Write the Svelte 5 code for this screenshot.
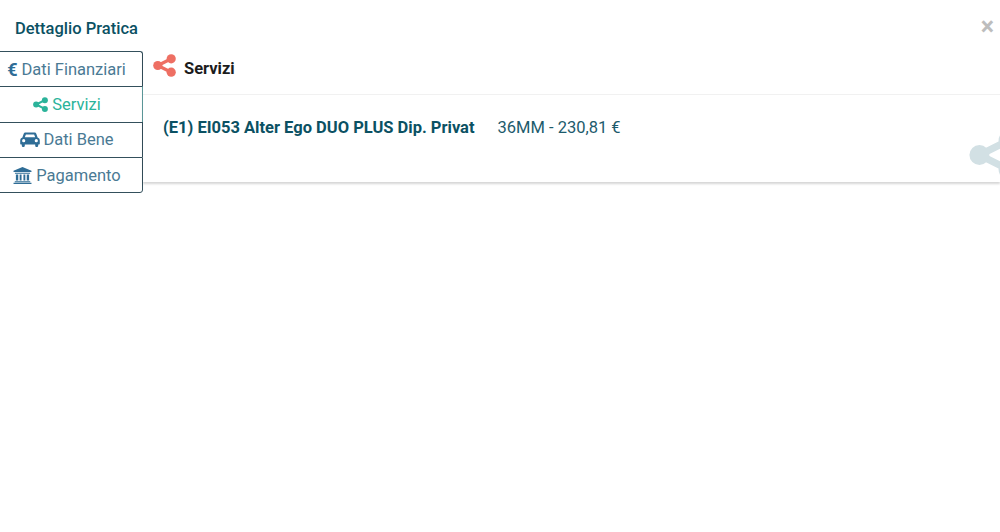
<script>
	const tabs = [
		{ label: 'Dati Finanziari', icon: 'euro' },
		{ label: 'Servizi', icon: 'share', active: true },
		{ label: 'Dati Bene', icon: 'car' },
		{ label: 'Pagamento', icon: 'bank' }
	];
</script>

{#snippet share(cls)}
	<svg class={cls} viewBox="0 0 24 24" aria-hidden="true">
		<path d="M19 5 5 12l14 7" fill="none" stroke="currentColor" stroke-width="3.4" />
		<circle cx="19" cy="5" r="4.8" fill="currentColor" />
		<circle cx="5" cy="12" r="4.8" fill="currentColor" />
		<circle cx="19" cy="19" r="4.8" fill="currentColor" />
	</svg>
{/snippet}

<div class="modal">
	<header class="top">
		<h4>Dettaglio Pratica</h4>
		<span class="close">×</span>
	</header>

	<div class="content">
		<nav class="tabs">
			{#each tabs as tab}
				<div class="tab" class:active={tab.active}>
					{#if tab.icon === 'euro'}
						<span class="euro">€</span>
					{:else if tab.icon === 'share'}
						{@render share('tab-share')}
					{:else if tab.icon === 'car'}
						<svg class="car" viewBox="0 0 20 16" aria-hidden="true">
							<path fill="currentColor" fill-rule="evenodd" d="M5.600 1h8.800c.9 0 1.600.5 1.900 1.300L17.600 6c1.300.4 2.200 1.500 2.200 2.900v3.300c0 .4-.3.7-.7.7h-.9v1.300c0 .8-.7 1.400-1.500 1.400s-1.500-.6-1.500-1.400v-1.300H4.800v1.300c0 .8-.7 1.400-1.500 1.400s-1.500-.6-1.500-1.400v-1.300H.9c-.4 0-.7-.3-.7-.7V8.900C.2 7.500 1.100 6.400 2.400 6l1.300-3.700C4 1.500 4.700 1 5.600 1ZM5.900 3 4.800 5.800h10.400L14.100 3ZM3.700 7.600a1.600 1.600 0 1 0 0 3.200 1.600 1.600 0 0 0 0-3.200Zm12.600 0a1.600 1.600 0 1 0 0 3.200 1.600 1.600 0 0 0 0-3.200Z" />
						</svg>
					{:else}
						<svg class="bank" viewBox="0 0 20 18" aria-hidden="true">
							<path fill="currentColor" d="M10 0 19.500 4v1.300H.5V4ZM2 6h16v1.200H2ZM3 8h2.500v6.200H3Zm4 0h2v6.200H7Zm4 0h2v6.200h-2Zm3.500 0H17v6.200h-2.500ZM1.800 15h16.400v1.200H1.800ZM.5 16.700h19V18H.5Z" />
						</svg>
					{/if}
					<span>{tab.label}</span>
				</div>
			{/each}
		</nav>

		<section class="panel">
			<div class="panel-head">
				{@render share('head-share')}
				<strong>Servizi</strong>
			</div>
			<div class="panel-body">
				<span class="name">(E1) EI053 Alter Ego DUO PLUS Dip. Privat</span>
				<span class="price">36MM - 230,81 €</span>
				{@render share('watermark')}
			</div>
		</section>
	</div>
</div>

<style>
	:global(body) {
		background: #fff;
		font-family: Roboto, "Liberation Sans", sans-serif;
	}

	.modal {
		height: 532px;
		overflow: hidden;
		background: #fff;
	}

	.top {
		display: flex;
		align-items: center;
		justify-content: space-between;
		height: 51px;
		padding: 5px 6px 0 15px;
		box-sizing: border-box;
	}

	h4 {
		margin: 0;
		font-size: 16.5px;
		font-weight: 500;
		color: #0b5163;
	}

	.close {
		margin-top: -4px;
		font-size: 25px;
		font-weight: 700;
		line-height: 1;
		color: #bdbdbd;
	}

	.content {
		display: flex;
		align-items: flex-start;
	}

	.tabs {
		width: 144px;
		margin-left: -1px;
		flex-shrink: 0;
	}

	.tab {
		display: flex;
		align-items: center;
		justify-content: center;
		gap: 4px;
		height: 34.25px;
		padding-right: 8px;
		border: 1px solid #34505c;
		border-bottom: 0;
		font-size: 16.5px;
		color: #4a7a94;
	}

	.tab:first-child {
		padding-right: 9px;
		border-top-right-radius: 3px;
	}

	.tab:last-child {
		height: 33.25px;
		padding-top: 1px;
		border-bottom: 1px solid #34505c;
		border-bottom-right-radius: 3px;
	}

	.tab.active {
		color: #2bb39a;
		border-right-color: #5f9ea0;
		border-left-color: #5f9ea0;
	}

	.euro {
		font-weight: 700;
		font-size: 18px;
		color: #2f6d96;
	}

	.car {
		width: 20px;
		height: 17px;
		margin-right: -1px;
		color: #2f6d96;
	}

	.bank {
		width: 19px;
		height: 17px;
		color: #2f6d96;
	}

	:global(.tab-share) {
		width: 15px;
		height: 15px;
	}

	.panel {
		flex: 1;
		min-width: 0;
		box-shadow: 0 2px 2px rgba(0, 0, 0, 0.16);
	}

	.panel-head {
		display: flex;
		align-items: flex-start;
		gap: 8px;
		padding: 8px 0 0 10px;
		height: 35px;
		border-bottom: 1px solid #f1f1f1;
		font-size: 16.5px;
		color: #1c1c1c;
	}

	.panel-head strong {
		font-weight: 700;
		line-height: 20px;
	}

	:global(.head-share) {
		width: 23px;
		height: 23px;
		margin-top: -5px;
		color: #ee6f63;
	}

	.panel-body {
		position: relative;
		display: flex;
		gap: 23px;
		height: 87px;
		padding: 23px 0 0 20px;
		box-sizing: border-box;
		overflow: hidden;
		font-size: 16.5px;
		line-height: 19px;
		color: #0b5163;
	}

	.name {
		font-weight: 700;
	}

	.price {
		color: #1d5b6c;
	}

	:global(.watermark) {
		position: absolute;
		right: -20px;
		top: 35px;
		width: 52px;
		height: 50px;
		color: #d2e0e4;
	}
</style>
